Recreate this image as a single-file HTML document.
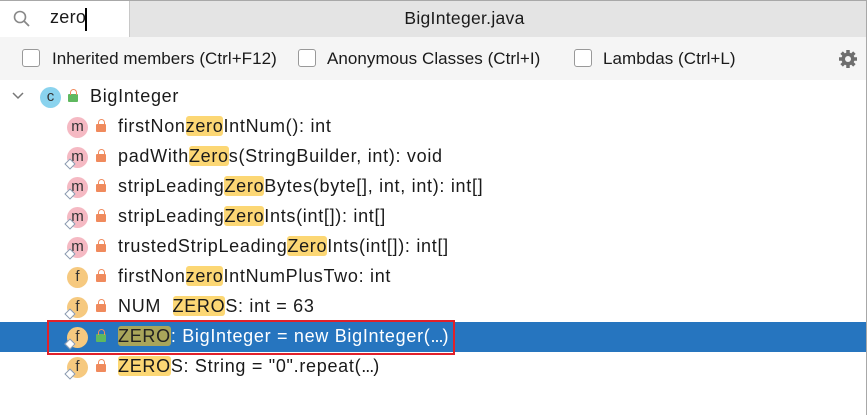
<!DOCTYPE html>
<html><head><style>
body{margin:0;width:867px;height:415px;overflow:hidden;background:#fff;font-family:"Liberation Sans","Noto Sans CJK SC",sans-serif;font-size:17px;letter-spacing:0.3px;color:#1a1a1a;position:relative}
.top{position:absolute;left:0;top:0;width:867px;height:37px;background:#e4e4e4;border-top:1px solid #a8a8a8;box-sizing:border-box}
.search{position:absolute;left:0;top:1px;width:130px;height:36px;background:#fff;border-right:1px solid #c8c8c8;box-sizing:border-box}
.title{position:absolute;left:0;right:0;top:8px;text-align:center;padding-left:62px;font-size:17.5px}
.bar{position:absolute;left:0;top:37px;width:867px;height:43px;background:#f5f5f5}
.rb{position:absolute;right:0;top:0;width:1px;height:415px;background:#a8a8a8}
.cb{position:absolute;top:49px;width:18px;height:18px;border:1px solid #999;border-radius:3px;background:#fff;box-sizing:border-box}
.lbl{position:absolute;top:49px;letter-spacing:0.05px}
.row{position:absolute;left:0;width:866px;height:30px}
.row .t{position:absolute;top:4px;left:118px;white-space:nowrap;font-size:18px;letter-spacing:0.7px}
.hl{background:#fcd774;border-radius:3px}
.ic{position:absolute;top:5px;width:21px;height:21px;border-radius:50%;text-align:center;font-size:15px;line-height:20px;color:#333;letter-spacing:0}
.m{background:#f5b9c3}.f{background:#f6c97f}
.lock{position:absolute;top:12px;width:10px;height:8px;background:#f08a5d;border-radius:1px}
.lock:before{content:"";position:absolute;left:1.5px;top:-5px;width:5px;height:5px;border:1.5px solid #f08a5d;border-bottom:none;border-radius:4px 4px 0 0}
.dia{position:absolute;top:18px;width:6px;height:6px;border:1.5px solid #8a9ab0;transform:rotate(45deg);background:#fff}
</style></head><body>
<div class="top"></div>
<div class="search">
<svg style="position:absolute;left:13px;top:9px" width="18" height="18" viewBox="0 0 18 18"><circle cx="7" cy="7" r="5.5" fill="none" stroke="#888" stroke-width="1.6"/><line x1="11" y1="11" x2="16" y2="16" stroke="#888" stroke-width="1.8"/></svg>
<span style="position:absolute;left:50px;top:6px;font-size:18px">zero</span>
<div style="position:absolute;left:85px;top:7px;width:1.5px;height:23px;background:#000"></div>
</div>
<div class="title">BigInteger.java</div>
<div class="bar"></div>
<div class="rb"></div>
<div class="cb" style="left:22px"></div><div class="lbl" style="left:52px">Inherited members (Ctrl+F12)</div>
<div class="cb" style="left:298px"></div><div class="lbl" style="left:327px">Anonymous Classes (Ctrl+I)</div>
<div class="cb" style="left:574px"></div><div class="lbl" style="left:603px">Lambdas (Ctrl+L)</div>
<svg style="position:absolute;left:838px;top:49px" width="20" height="20" viewBox="0 0 20 20"><g fill="#6e6e6e"><circle cx="10" cy="10" r="6.5"/><g stroke="#6e6e6e" stroke-width="3.5"><line x1="10" y1="1" x2="10" y2="19"/><line x1="1" y1="10" x2="19" y2="10"/><line x1="3.6" y1="3.6" x2="16.4" y2="16.4"/><line x1="16.4" y1="3.6" x2="3.6" y2="16.4"/></g></g><circle cx="10" cy="10" r="3" fill="#f5f5f5"/></svg>

<div class="row" style="top:82px">
<svg style="position:absolute;left:12px;top:10px" width="12" height="8"><polyline points="1,1 6,6 11,1" fill="none" stroke="#777" stroke-width="1.5"/></svg>
<div class="ic" style="left:40px;background:#8ad3ee">c</div>
<div class="lock" style="left:68px;background:#5fb85f"></div>
<span class="t" style="left:90px">BigInteger</span></div>

<div class="row" style="top:112px"><div class="ic m" style="left:67px">m</div><div class="lock" style="left:96px"></div><span class="t">firstNon<span class="hl">zero</span>IntNum(): int</span></div>
<div class="row" style="top:142px"><div class="ic m" style="left:67px">m</div><div class="dia" style="left:66px"></div><div class="lock" style="left:96px"></div><span class="t">padWith<span class="hl">Zero</span>s(StringBuilder, int): void</span></div>
<div class="row" style="top:172px"><div class="ic m" style="left:67px">m</div><div class="dia" style="left:66px"></div><div class="lock" style="left:96px"></div><span class="t">stripLeading<span class="hl">Zero</span>Bytes(byte[], int, int): int[]</span></div>
<div class="row" style="top:202px"><div class="ic m" style="left:67px">m</div><div class="dia" style="left:66px"></div><div class="lock" style="left:96px"></div><span class="t">stripLeading<span class="hl">Zero</span>Ints(int[]): int[]</span></div>
<div class="row" style="top:232px"><div class="ic m" style="left:67px">m</div><div class="dia" style="left:66px"></div><div class="lock" style="left:96px"></div><span class="t">trustedStripLeading<span class="hl">Zero</span>Ints(int[]): int[]</span></div>
<div class="row" style="top:262px"><div class="ic f" style="left:67px">f</div><div class="lock" style="left:96px"></div><span class="t">firstNon<span class="hl">zero</span>IntNumPlusTwo: int</span></div>
<div class="row" style="top:292px"><div class="ic f" style="left:67px">f</div><div class="dia" style="left:66px"></div><div class="lock" style="left:96px"></div><span class="t">NUM&nbsp; <span class="hl">ZERO</span>S: int = 63</span></div>
<div class="row" style="top:322px;background:#2675bf;color:#fff"><div class="ic f" style="left:67px">f</div><div class="dia" style="left:66px"></div><div class="lock" style="left:96px;background:#5fb85f"></div><span class="t"><span class="hl" style="background:#a9a55a;color:#222">ZERO</span>: BigInteger = new BigInteger(<span style="letter-spacing:-1px">...</span>)</span></div>
<div style="position:absolute;left:47px;top:320px;width:408px;height:35px;border:2px solid #e0202a;box-sizing:border-box"></div>
<div class="row" style="top:352px"><div class="ic f" style="left:67px">f</div><div class="dia" style="left:66px"></div><div class="lock" style="left:96px"></div><span class="t"><span class="hl">ZERO</span>S: String = "0".repeat(<span style="letter-spacing:-1px">...</span>)</span></div>
</body></html>
